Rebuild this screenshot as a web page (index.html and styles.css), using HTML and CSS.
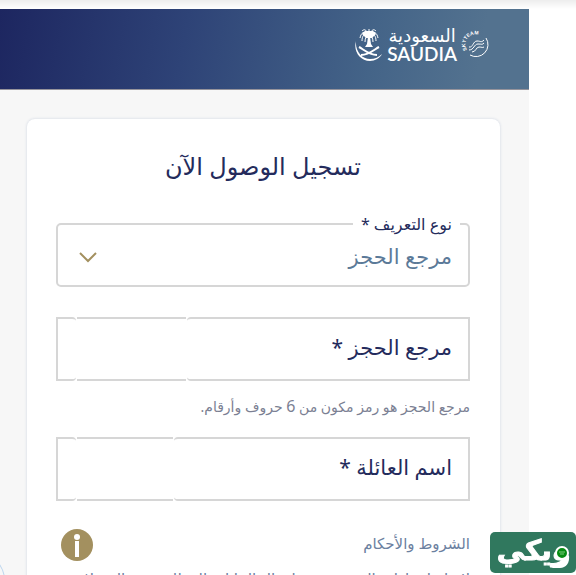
FILE: index.html
```html
<!DOCTYPE html>
<html lang="ar" dir="rtl">
	<head>
		<meta charset="utf-8">
		<meta name="viewport" content="width=device-width, initial-scale=1">
		<title>تسجيل الوصول</title>
		<link rel="stylesheet" href="styles.css">
	</head>
	<body>
		<div class="page">
			<header class="header">
				<a class="logo" href="#" aria-label="Saudia">
					<svg class="skyteam" viewBox="0 0 28 34" aria-hidden="true">
						<defs>
							<path id="ring" d="M6 22A10 10 0 0 1 21 9"/>
						</defs>
						<text class="skyteam-text"><textPath href="#ring">SKYTEAM</textPath></text>
						<path class="line" d="M25 10A12 12 0 0 1 9 27"/>
						<path class="wave" d="M8 19c4 1 4-6 8-6s4 2 7-1M8 22c5 0 5-6 9-6s4 1 6-1M11 24c4 0 4-5 7-5s3 1 5 0"/>
					</svg>
					<span class="wordmark">
						<span class="wordmark-ar">السعودية</span>
						<span class="wordmark-en">SAUDIA</span>
					</span>
					<svg class="emblem" viewBox="0 0 28 34" aria-hidden="true">
						<path d="M1 13C-2 23 5 33 15 33c5 0 10-3 12-7-3 3-7 5-12 5C7 31 0 23 1 13z" fill="#fff"/>
						<path class="leaf" d="M14 6C9 2 6 5 5 10M14 6C9 5 7 8 7 13M14 6c-3 2-4 5-4 8M14 6c5-4 8-1 9 4M14 6c5-1 7 2 7 7M14 6c3 2 4 5 4 8M13 6C11 1 9 1 7 3M15 6c2-5 4-5 6-3M14 6V1"/>
						<path d="M10 3h8l3 3-4 4h-6L7 6z" fill="#fff"/>
						<path d="M13 9h2l1 7 2 3h-8l2-3z" fill="#fff"/>
						<path class="sword" d="M4 19c4 2 10 8 18 8M24 19c-4 2-10 8-18 8"/>
					</svg>
				</a>
			</header>
			<main class="card">
				<h1 class="title">تسجيل الوصول الآن</h1>
				<form class="form">
					<fieldset class="select-box">
						<legend><label for="type">نوع التعريف *</label></legend>
						<select id="type">
							<option>مرجع الحجز</option>
						</select>
						<svg class="chevron" viewBox="0 0 20 12" aria-hidden="true">
							<path d="M2 2l8 8 8-8"/>
						</svg>
					</fieldset>
					<div class="field">
						<label for="reference">مرجع الحجز *</label>
						<input id="reference" type="text" required>
						<div class="outline"><i></i><i class="notch wide"></i><i></i></div>
					</div>
					<p class="hint">مرجع الحجز هو رمز مكون من <span class="digit">6</span> حروف وأرقام.</p>
					<div class="field">
						<label for="surname">اسم العائلة *</label>
						<input id="surname" type="text" required>
						<div class="outline"><i></i><i class="notch"></i><i></i></div>
					</div>
				</form>
				<div class="terms">
					<a href="#">الشروط والأحكام</a>
					<button class="info" type="button" aria-label="معلومات">
						<svg viewBox="0 0 32 32" aria-hidden="true">
							<circle cx="16" cy="16" r="16" fill="#a3905f"/>
							<circle cx="16" cy="8" r="3" fill="#fff"/>
							<path d="M14 12h4v16h-4z" fill="#fff"/>
						</svg>
					</button>
				</div>
				<p class="terms-text">لإتمام إجراءات السفر يرجى إدخال البيانات المطلوبة من المسافر</p>
			</main>
			<span class="bubble"></span>
		</div>
		<div class="badge">
			<span>ويكي</span>
			<svg class="pen" viewBox="0 0 26 26" aria-hidden="true">
				<circle cx="13" cy="9" r="6" fill="#078c13" stroke="#fff" stroke-width="2"/>
				<path d="M10 8h6M11 10h4" stroke="#7fd07f"/>
				<path d="M0 22l4-2h7c4 0 6-3 6-6l3-3c1 8-3 13-9 13H4z" fill="#fff"/>
			</svg>
		</div>
	</body>
</html>
```

FILE: styles.css
```css
*{
	box-sizing: border-box;
	margin: 0;
	padding: 0;
}
html,body{
	height: 100%;
	overflow: hidden;
}
body{
	padding: 9px 47px 0 0;
	background: linear-gradient(#ededed, #fff 9px);
	font-family: "Noto Sans", "DejaVu Sans", sans-serif;
	color: #242b5c;
}
.page{
	position: relative;
	height: 100%;
	background: #f7f7f7;
	overflow: hidden;
}
.header{
	display: flex;
	align-items: center;
	height: 81px;
	padding: 0 40px 8px;
	background: linear-gradient(100deg, #1d2660 0%, #2e4377 35%, #446488 70%, #53728f 90%);
	border-bottom: 1px solid #96949c;
}
.logo{
	display: flex;
	align-items: center;
	gap: 4px;
	color: #fff;
	text-decoration: none;
}
.emblem,
.skyteam{
	width: 28px;
	height: 34px;
}
.line,
.leaf,
.wave,
.sword{
	fill: none;
	stroke: #fff;
}
.sword{
	stroke-width: 2;
}
.skyteam-text{
	fill: #fff;
	font: bold 5px "Liberation Sans", sans-serif;
	direction: ltr;
}
.wordmark{
	display: flex;
	flex-direction: column;
	align-items: center;
}
.wordmark-ar{
	font-size: 18px;
	font-weight: 500;
	line-height: 18px;
}
.wordmark-en{
	font: 600 19px/20px Lato, sans-serif;
}
.card{
	margin: 29px 29px 0 27px;
	padding: 30px 30px 30px 29px;
	background: #fff;
	border-radius: 8px;
	box-shadow: 0 0 3px #ccd3df;
}
.title{
	font-size: 24px;
	font-weight: 400;
	line-height: 34px;
	text-align: center;
}
.select-box{
	position: relative;
	height: 74px;
	margin-top: 30px;
	padding: 0 16px;
	border: 2px solid #d6d6d6;
	border-radius: 5px;
}
.select-box legend{
	padding: 0 8px;
	margin-right: -8px;
	font-size: 16px;
	line-height: 22px;
}
.select-box select{
	width: 100%;
	height: 42px;
	border: 0;
	background: none;
	appearance: none;
	font: 21px/42px "Noto Sans", "DejaVu Sans", sans-serif;
	color: #5b7a98;
}
.chevron{
	position: absolute;
	left: 20px;
	top: 16px;
	width: 20px;
	height: 12px;
	fill: none;
	stroke: #a3905f;
	stroke-width: 2;
}
.field{
	position: relative;
	height: 64px;
	margin-top: 30px;
}
.field label{
	position: absolute;
	top: 0;
	right: 18px;
	font-size: 21px;
	line-height: 60px;
}
.field input{
	width: 100%;
	height: 100%;
	padding: 0 18px;
	border: 0;
	background: none;
	font-size: 21px;
}
.outline{
	position: absolute;
	inset: 0;
	display: flex;
	gap: 1px;
	pointer-events: none;
}
.outline i{
	flex: 1;
	border: 2px solid #d6d6d6;
}
.outline i:first-child{
	border-left: 0;
	border-radius: 4px 0 0 4px;
}
.outline i:last-child{
	flex: 0 0 20px;
	border-right: 0;
	border-radius: 0 4px 4px 0;
}
.outline .notch{
	flex: 0 0 96px;
	border-width: 2px 0;
}
.outline .wide{
	flex-basis: 109px;
}
.hint{
	margin-top: 13px;
	font-size: 14px;
	line-height: 24px;
	color: #7b7f93;
}
.digit{
	font-size: 16px;
}
.hint + .field{
	margin-top: 18px;
}
.terms{
	display: flex;
	align-items: center;
	justify-content: space-between;
	margin-top: 28px;
	padding-left: 5px;
}
.terms a{
	font-size: 15px;
	line-height: 24px;
	padding-bottom: 4px;
	color: #6b80a0;
	text-decoration: none;
}
.info{
	width: 32px;
	height: 32px;
	border: 0;
	background: none;
}
.info svg{
	display: block;
}
.terms-text{
	margin-top: 5px;
	font-size: 15px;
	line-height: 24px;
	color: #6b80a0;
	white-space: nowrap;
}
.bubble{
	position: absolute;
	left: -74px;
	top: 536px;
	width: 80px;
	height: 80px;
	border: 1px solid #bcd5ee;
	border-radius: 50%;
}
.badge{
	position: fixed;
	right: 0;
	bottom: 2px;
	width: 86px;
	height: 41px;
	background: #30785e;
	border-radius: 5px;
	color: #fff;
	font-size: 28px;
	font-weight: 700;
	line-height: 34px;
	text-align: center;
	-webkit-text-stroke: 1px #fff;
}
.pen{
	position: absolute;
	right: 1px;
	bottom: 3px;
	width: 26px;
	height: 26px;
}
```
